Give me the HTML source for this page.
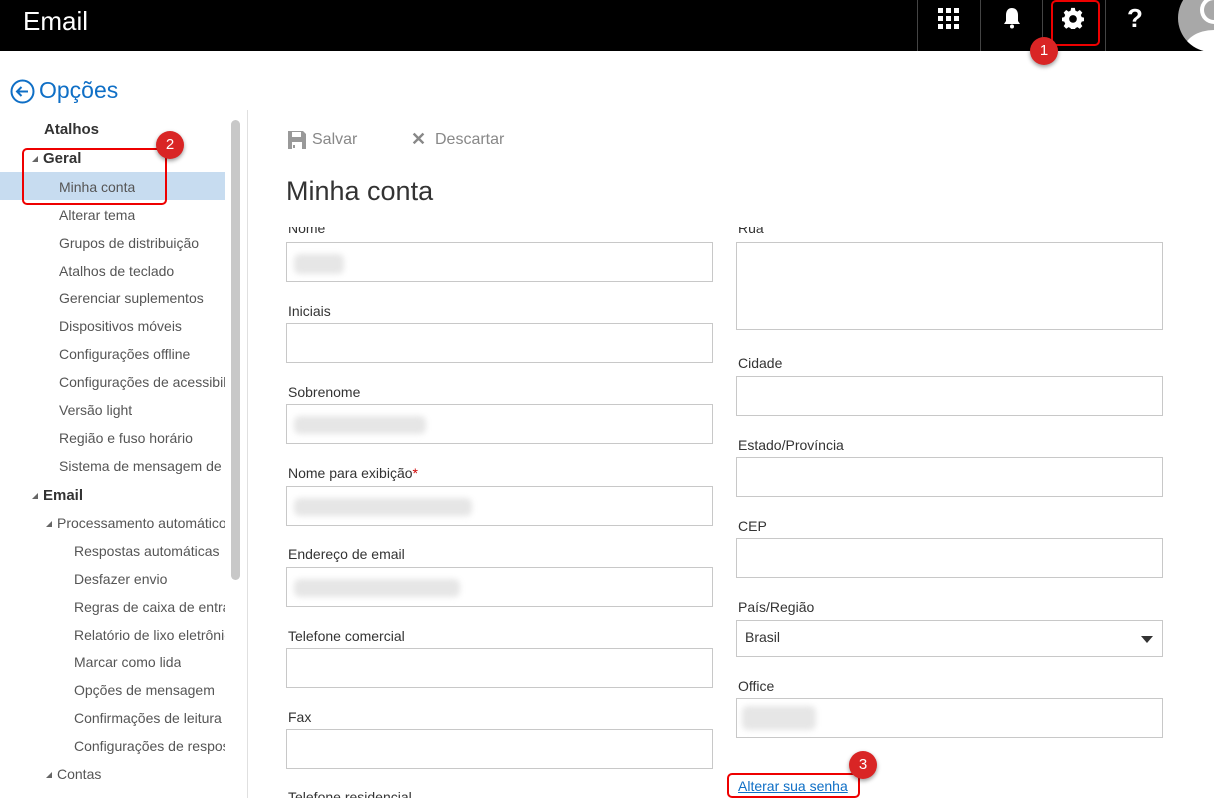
<!DOCTYPE html>
<html><head><meta charset="utf-8"><style>
*{box-sizing:border-box;margin:0;padding:0}
body{width:1214px;height:798px;overflow:hidden;background:#fff;font-family:"Liberation Sans",sans-serif;position:relative;color:#333}
.top{position:absolute;left:0;top:0;width:1214px;height:51px;background:#000;overflow:hidden}
.top .t{position:absolute;left:23px;top:6px;color:#fff;font-size:26px}
.sep{position:absolute;top:0;width:1px;height:51px;background:#444}
.ab{position:absolute}
.nav{position:absolute;font-size:14px;color:#555;white-space:nowrap;overflow:hidden}
.lbl{position:absolute;font-size:14px;color:#333}
.inp{position:absolute;border:1px solid #c8c8c8;height:40px;background:#fff}
.blur{position:absolute;background:#e6e6e6;border-radius:6px;filter:blur(3px)}
.badge{position:absolute;width:28px;height:28px;border-radius:50%;background:#d92525;color:#fff;font-size:15px;text-align:center;line-height:28px;box-shadow:0 2px 4px rgba(0,0,0,.4)}
.rb{position:absolute;border:2px solid #e00;border-radius:5px}
.tri{display:inline-block;width:0;height:0;border-left:6px solid transparent;border-bottom:6px solid #666;margin-right:5px;vertical-align:1px}
</style></head><body>
<div class="top"><div class="t">Email</div>
<div class="sep" style="left:917px"></div><div class="sep" style="left:980px"></div><div class="sep" style="left:1042px"></div><div class="sep" style="left:1105px"></div>
<svg class="ab" style="left:938px;top:8px" width="22" height="22"><g fill="#fff"><rect x="0" y="0" width="5" height="5"/><rect x="8" y="0" width="5" height="5"/><rect x="16" y="0" width="5" height="5"/><rect x="0" y="8" width="5" height="5"/><rect x="8" y="8" width="5" height="5"/><rect x="16" y="8" width="5" height="5"/><rect x="0" y="16" width="5" height="5"/><rect x="8" y="16" width="5" height="5"/><rect x="16" y="16" width="5" height="5"/></g></svg>
<svg class="ab" style="left:1002px;top:7px" width="20" height="22"><path d="M10 1c-4 0-6 3-6 7v6l-2 3h16l-2-3V8c0-4-2-7-6-7z" fill="#fff"/><circle cx="10" cy="19.5" r="2" fill="#fff"/></svg>
<svg class="ab" style="left:1062px;top:7px" width="22" height="22" viewBox="0 0 24 24"><path fill="#fff" d="M10 1h4l.6 3 2.2 1 2.6-1.7 2.8 2.8L20.5 8.7l1 2.3 2.5.6v3.8l-2.5.6-1 2.3 1.7 2.6-2.8 2.8-2.6-1.7-2.2 1-.6 3h-4l-.6-3-2.2-1-2.6 1.7-2.8-2.8 1.7-2.6-1-2.3L0 15.4v-3.8l2.5-.6 1-2.3L1.8 6.1l2.8-2.8L7.2 5l2.2-1z"/><circle cx="12" cy="13" r="4.2" fill="#000"/></svg>
<div class="ab" style="left:1127px;top:3px;color:#fff;font-size:26px;font-weight:bold">?</div>
<svg class="ab" style="left:1172px;top:-12px" width="80" height="64"><defs><clipPath id="c"><circle cx="40" cy="30" r="34"/></clipPath></defs><circle cx="40" cy="30" r="34" fill="#a8a8a8"/><g clip-path="url(#c)" fill="#fff"><circle cx="42" cy="22" r="14"/><ellipse cx="42" cy="62" rx="30" ry="20"/></g><circle cx="42" cy="22" r="10" fill="#a8a8a8"/></svg>
</div>
<div class="rb" style="left:1051px;top:0;width:49px;height:46px"></div>
<div class="badge" style="left:1030px;top:37px">1</div>

<svg class="ab" style="left:10px;top:79px" width="25" height="25"><circle cx="12.5" cy="12.5" r="11" fill="none" stroke="#0f6fc6" stroke-width="2"/><path d="M18 12.5H7M11.5 8l-4.5 4.5 4.5 4.5" fill="none" stroke="#0f6fc6" stroke-width="2"/></svg>
<div class="ab" style="left:39px;top:77px;font-size:23px;color:#0f6fc6">Opções</div>

<div class="ab" style="left:0;top:172px;width:225px;height:28px;background:#c7dcf0"></div>
<div class="ab" style="left:231px;top:120px;width:9px;height:460px;background:#c8c8c8;border-radius:5px"></div>
<div class="ab" style="left:247px;top:110px;width:1px;height:688px;background:#e0e0e0"></div>
<div class="nav" style="left:44px;top:121px;font-size:15px;font-weight:bold;color:#333">Atalhos</div>
<div class="nav" style="left:32px;top:150px;font-size:15px;font-weight:bold;color:#333"><span class="tri"></span>Geral</div>
<div class="nav" style="left:32px;top:487px;font-size:15px;font-weight:bold;color:#333"><span class="tri"></span>Email</div>
<div class="nav" style="left:59px;top:179px">Minha conta</div>
<div class="nav" style="left:59px;top:207px">Alterar tema</div>
<div class="nav" style="left:59px;top:235px">Grupos de distribuição</div>
<div class="nav" style="left:59px;top:263px">Atalhos de teclado</div>
<div class="nav" style="left:59px;top:290px">Gerenciar suplementos</div>
<div class="nav" style="left:59px;top:318px">Dispositivos móveis</div>
<div class="nav" style="left:59px;top:346px">Configurações offline</div>
<div class="nav" style="left:59px;top:374px;width:166px">Configurações de acessibilidade</div>
<div class="nav" style="left:59px;top:402px">Versão light</div>
<div class="nav" style="left:59px;top:430px">Região e fuso horário</div>
<div class="nav" style="left:59px;top:458px;width:166px">Sistema de mensagem de texto</div>
<div class="nav" style="left:46px;top:515px;width:179px"><span class="tri"></span>Processamento automático</div>
<div class="nav" style="left:74px;top:543px;width:151px">Respostas automáticas</div>
<div class="nav" style="left:74px;top:571px">Desfazer envio</div>
<div class="nav" style="left:74px;top:599px;width:151px">Regras de caixa de entrada</div>
<div class="nav" style="left:74px;top:627px;width:151px">Relatório de lixo eletrônico</div>
<div class="nav" style="left:74px;top:654px">Marcar como lida</div>
<div class="nav" style="left:74px;top:682px;width:151px">Opções de mensagem</div>
<div class="nav" style="left:74px;top:710px;width:151px">Confirmações de leitura</div>
<div class="nav" style="left:74px;top:738px;width:151px">Configurações de resposta</div>
<div class="nav" style="left:46px;top:766px"><span class="tri"></span>Contas</div>
<div class="rb" style="left:22px;top:148px;width:145px;height:57px"></div>
<div class="badge" style="left:156px;top:131px">2</div>

<svg class="ab" style="left:288px;top:131px" width="18" height="18"><path d="M0 0h15l3 3v15H0z" fill="#999"/><rect x="4" y="1" width="9" height="5" fill="#fff"/><rect x="4" y="11" width="10" height="7" fill="#fff"/><rect x="5" y="14" width="2" height="3" fill="#999"/></svg>
<div class="ab" style="left:312px;top:131px;font-size:16px;color:#888">Salvar</div>
<div class="ab" style="left:411px;top:129px;font-size:18px;color:#888;font-weight:bold">✕</div>
<div class="ab" style="left:435px;top:131px;font-size:16px;color:#888">Descartar</div>
<div class="ab" style="left:286px;top:176px;font-size:27px;color:#333">Minha conta</div>

<div class="ab" style="left:248px;top:227px;width:966px;height:571px;overflow:hidden">
<div style="position:absolute;left:-248px;top:-227px;width:1214px;height:798px">
<div class="lbl" style="left:288px;top:220px">Nome</div>
<div class="inp" style="left:286px;top:242px;width:427px"></div><div class="blur" style="left:294px;top:254px;width:50px;height:20px"></div>
<div class="lbl" style="left:288px;top:303px">Iniciais</div><div class="inp" style="left:286px;top:323px;width:427px"></div>
<div class="lbl" style="left:288px;top:384px">Sobrenome</div><div class="inp" style="left:286px;top:404px;width:427px"></div><div class="blur" style="left:294px;top:416px;width:132px;height:18px"></div>
<div class="lbl" style="left:288px;top:465px">Nome para exibição<span style="color:#c00">*</span></div><div class="inp" style="left:286px;top:486px;width:427px"></div><div class="blur" style="left:294px;top:498px;width:178px;height:18px"></div>
<div class="lbl" style="left:288px;top:546px">Endereço de email</div><div class="inp" style="left:286px;top:567px;width:427px"></div><div class="blur" style="left:294px;top:579px;width:166px;height:18px"></div>
<div class="lbl" style="left:288px;top:628px">Telefone comercial</div><div class="inp" style="left:286px;top:648px;width:427px"></div>
<div class="lbl" style="left:288px;top:709px">Fax</div><div class="inp" style="left:286px;top:729px;width:427px"></div>
<div class="lbl" style="left:288px;top:789px">Telefone residencial</div>
<div class="lbl" style="left:738px;top:220px">Rua</div><div class="inp" style="left:736px;top:242px;width:427px;height:88px"></div>
<div class="lbl" style="left:738px;top:355px">Cidade</div><div class="inp" style="left:736px;top:376px;width:427px"></div>
<div class="lbl" style="left:738px;top:437px">Estado/Província</div><div class="inp" style="left:736px;top:457px;width:427px"></div>
<div class="lbl" style="left:738px;top:518px">CEP</div><div class="inp" style="left:736px;top:538px;width:427px"></div>
<div class="lbl" style="left:738px;top:599px">País/Região</div><div class="inp" style="left:736px;top:620px;width:427px;height:37px"></div>
<div class="lbl" style="left:745px;top:629px">Brasil</div>
<div class="ab" style="left:1141px;top:636px;width:0;height:0;border-left:6px solid transparent;border-right:6px solid transparent;border-top:7px solid #333"></div>
<div class="lbl" style="left:738px;top:678px">Office</div><div class="inp" style="left:736px;top:698px;width:427px"></div><div class="blur" style="left:742px;top:706px;width:74px;height:24px"></div>
</div></div>
<div class="ab" style="left:738px;top:778px;font-size:14px;color:#0f6fc6;text-decoration:underline">Alterar sua senha</div>
<div class="rb" style="left:727px;top:773px;width:133px;height:25px"></div>
<div class="badge" style="left:849px;top:751px">3</div>
</body></html>
